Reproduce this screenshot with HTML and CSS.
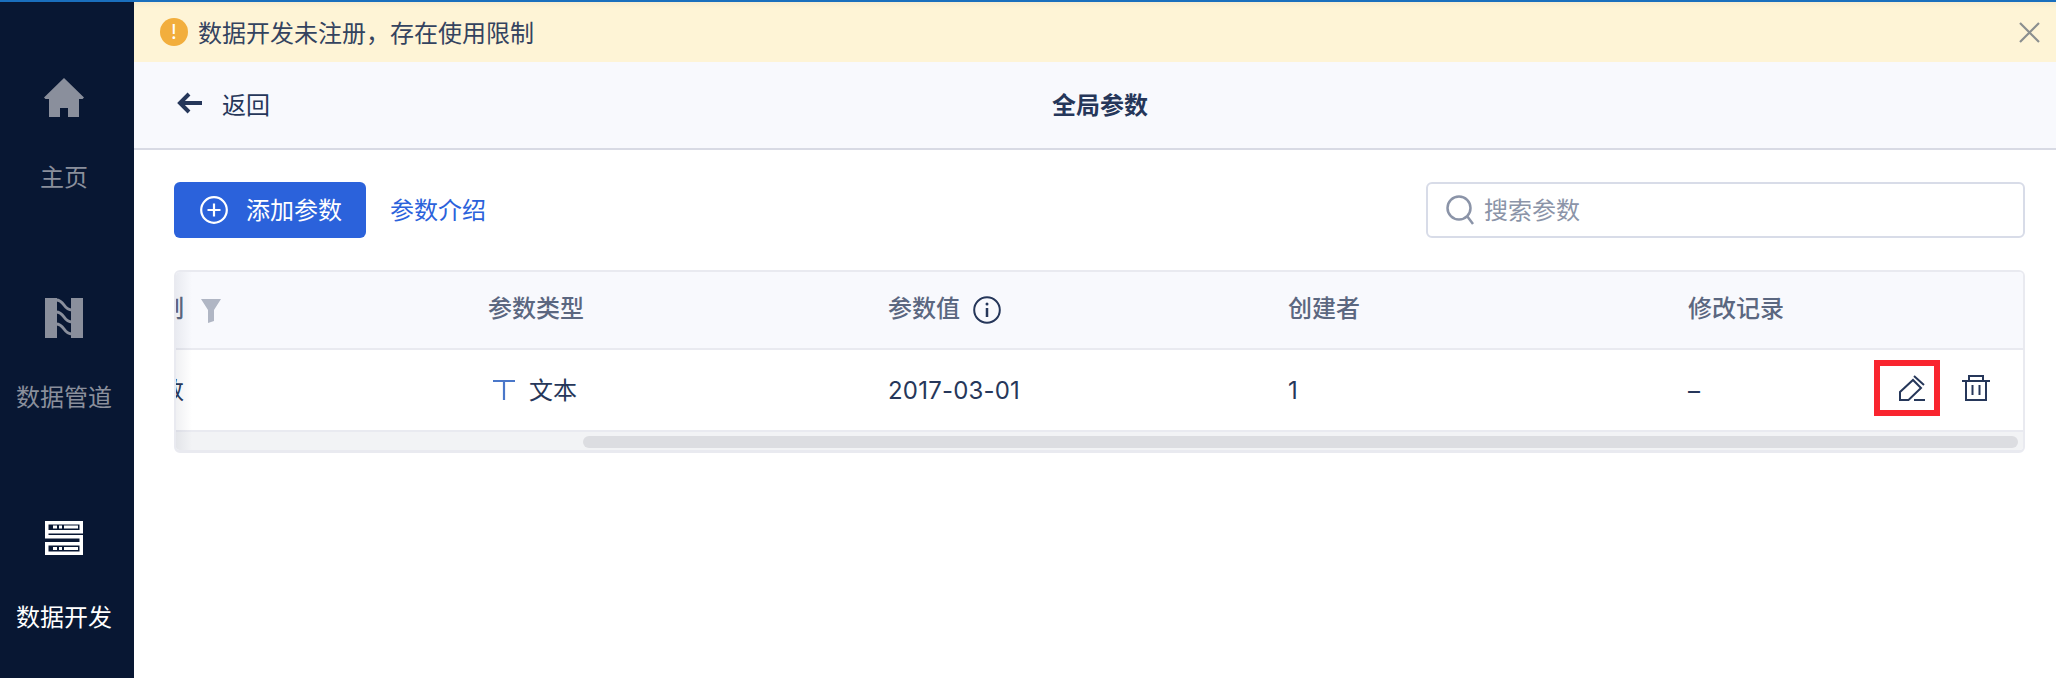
FILE: index.html
```html
<!doctype html>
<html lang="zh-CN">
  <head>
    <meta charset="utf-8">
    <title>全局参数</title>
    <link rel="stylesheet" href="styles.css">
  </head>
  <body>
    <div id="app">
      <nav id="sidebar">
        <a class="nav-item">
          <svg class="nav-icon" width="42" height="42" viewBox="0 0 42 42">
            <path d="M21 1 41 20.500 39.500 22H36V40H25V31H17V40H6V22H2.500L1 20.500Z" fill="currentColor"/>
          </svg>
          <span>主页</span>
        </a>
        <a class="nav-item">
          <svg class="nav-icon" width="38" height="42" viewBox="0 0 38 42" fill="none">
            <path d="M0 1H12V41H0ZM26 1H38V41H26Z" fill="currentColor"/>
            <g stroke="currentColor" stroke-width="3">
              <path d="M11 3C20 3 18 13 27 13"/>
              <path d="M11 15C20 15 18 25 27 25"/>
              <path d="M11 27C20 27 18 37 27 37"/>
            </g>
          </svg>
          <span>数据管道</span>
        </a>
        <a class="nav-item active">
          <svg class="nav-icon" width="38" height="42" viewBox="0 0 38 42" fill="none">
            <path d="M1.750 5.750H36.250V14.750H1.750ZM1.750 14.750V19.750H36.250V26.750M1.750 26.750H36.250V36.250H1.750Z" stroke="currentColor" stroke-width="3.500"/>
            <path d="M8 8.500H12V11.500H8ZM14 8.500H17V11.500H14ZM19 8.500H33V11.500H19ZM8 30H12V33H8ZM14 30H17V33H14ZM19 30H33V33H19Z" fill="currentColor"/>
          </svg>
          <span>数据开发</span>
        </a>
      </nav>

      <div id="content">
        <div class="notice">
          <span class="notice-icon">!</span>
          <span class="notice-text">数据开发未注册，存在使用限制</span>
          <svg class="notice-close" width="21" height="21" viewBox="0 0 21 21">
            <path d="M1 1 20 20M20 1 1 20" stroke="#8b8f8f" stroke-width="2.200" fill="none"/>
          </svg>
        </div>

        <header class="page-header">
          <a class="back">
            <svg width="26" height="22" viewBox="0 0 26 22" fill="none">
              <path d="M25 11H4M12 2 3 11 12 20" stroke="#26375a" stroke-width="4"/>
            </svg>
            <span>返回</span>
          </a>
          <h1>全局参数</h1>
        </header>

        <main class="page-body">
          <div class="toolbar">
            <button class="btn-add">
              <svg width="28" height="28" viewBox="0 0 28 28" fill="none" stroke="#fff" stroke-width="2.200">
                <circle cx="14" cy="14" r="12.800"/>
                <path d="M14 7.500V20.500M7.500 14H20.500"/>
              </svg>
              <span>添加参数</span>
            </button>
            <a class="link">参数介绍</a>
            <div class="search">
              <svg width="30" height="30" viewBox="0 0 30 30" fill="none" stroke="#8b94a8" stroke-width="2.500">
                <circle cx="13" cy="13" r="11.500"/>
                <path d="M21 21 27 29"/>
              </svg>
              <span>搜索参数</span>
            </div>
          </div>

          <div class="table">
            <div class="table-scroll">
              <div class="row head">
                <div class="cell first">
                  <span>限制</span>
                  <svg class="funnel" width="20" height="24" viewBox="0 0 20 24">
                    <path d="M0 0H20L13 11V22L7 24V11Z" fill="#b0b6c4"/>
                  </svg>
                </div>
                <div class="cell">参数类型</div>
                <div class="cell">
                  <span>参数值</span>
                  <svg class="info" width="28" height="28" viewBox="0 0 28 28" fill="none" stroke="#26375a" stroke-width="2">
                    <circle cx="14" cy="14" r="12.800"/>
                    <path d="M14 12V21" stroke-width="2.500"/>
                    <circle cx="14" cy="8" r="1.500" fill="#26375a" stroke="none"/>
                  </svg>
                </div>
                <div class="cell">创建者</div>
                <div class="cell">修改记录</div>
              </div>
              <div class="row">
                <div class="cell first"><span class="cjk">参数</span></div>
                <div class="cell">
                  <svg class="type-icon" width="22" height="20" viewBox="0 0 22 20">
                    <path d="M0 1H22M11 1V20" stroke="#4a77c9" stroke-width="2.200" fill="none"/>
                  </svg>
                  <span class="cjk">文本</span>
                </div>
                <div class="cell date">2017-03-01</div>
                <div class="cell">1</div>
                <div class="cell last">
                  <span>–</span>
                  <div class="actions">
                    <button class="action edit">
                      <svg width="26" height="26" viewBox="0 0 26 26" fill="none" stroke="#26375a" stroke-width="2">
                        <path d="M1 25V17L14 5 22 13 9.500 25ZM15 1 25 10M15 25H26"/>
                      </svg>
                    </button>
                    <button class="action">
                      <svg width="28" height="26" viewBox="0 0 28 26" fill="none" stroke="#26375a" stroke-width="2">
                        <path d="M0 6H28M7 6V1H21V6M4 6V25H24V6M10.500 10V20M17.500 10V20"/>
                      </svg>
                    </button>
                  </div>
                </div>
              </div>
            </div>
            <div class="scrollbar"><div class="thumb"></div></div>
            <div class="edge-shadow"></div>
          </div>
        </main>
      </div>
    </div>
  </body>
</html>
```

FILE: styles.css
```css
* {
  box-sizing: border-box;
}

html, body {
  height: 100%;
  margin: 0;
  overflow: hidden;
  background: #fff;
  color: #26375a;
  font-family: Inter, "Noto Sans CJK SC", sans-serif;
  font-size: 24px;
}

body {
  border-top: 2px solid #1a6fbd;
}

#app {
  display: flex;
  height: 100%;
}

#sidebar {
  flex: 0 0 134px;
  background: #081733;
  display: flex;
  flex-direction: column;
  padding: 75px 6px 0 0;
}

.nav-item {
  flex: 0 0 220px;
  display: flex;
  flex-direction: column;
  align-items: center;
  gap: 41px;
  color: #8a8f9c;
  line-height: 36px;
  white-space: nowrap;
}

.nav-item:last-child {
  flex-basis: auto;
}

.nav-item.active {
  color: #fff;
}

.nav-icon {
  flex: none;
}

#content {
  flex: 1 1 auto;
  min-width: 0;
  display: flex;
  flex-direction: column;
}

.notice {
  height: 60px;
  flex: none;
  display: flex;
  align-items: center;
  padding: 0 16px 0 26px;
  background: linear-gradient(#f7ecd0, #fef4d6 6px);
  color: #34435f;
}

.notice-icon {
  width: 28px;
  height: 28px;
  margin-right: 10px;
  border-radius: 50%;
  background: #f2ae3d;
  color: #fff;
  font-size: 20px;
  line-height: 28px;
  text-align: center;
}

.notice-text {
  flex: 1;
  padding-bottom: 2px;
}

.page-header {
  height: 88px;
  flex: none;
  display: flex;
  align-items: center;
  position: relative;
  padding: 0 0 4px 43px;
  background: #f8f9fd;
  border-bottom: 2px solid #d8dae4;
}

.back {
  display: flex;
  align-items: center;
  gap: 19px;
}

.page-header h1 {
  position: absolute;
  left: 0;
  right: 0;
  margin: 0 0 0 10px;
  font-size: 24px;
  font-weight: 700;
  text-align: center;
}

.page-body {
  padding: 32px 31px 0 40px;
}

.toolbar {
  display: flex;
  align-items: center;
  height: 56px;
}

.btn-add {
  width: 192px;
  height: 56px;
  display: flex;
  align-items: center;
  gap: 18px;
  padding: 0 0 0 26px;
  border: 0;
  border-radius: 6px;
  background: #2b62db;
  color: #fff;
  font: inherit;
}

.btn-add span,
.search span,
.link {
  padding-bottom: 4px;
}

.link {
  margin-left: 24px;
  color: #2b62db;
}

.search {
  width: 599px;
  height: 56px;
  margin-left: auto;
  display: flex;
  align-items: center;
  gap: 8px;
  padding-left: 18px;
  border: 2px solid #d8dce8;
  border-radius: 6px;
  color: #8b94a8;
}

.table {
  position: relative;
  margin-top: 32px;
  border: 2px solid #e9eaf0;
  border-bottom-width: 3px;
  border-radius: 6px;
  overflow: hidden;
}

.table-scroll {
  overflow: hidden;
}

.row {
  display: grid;
  grid-template-columns: 400px 400px 400px 400px 335px;
  margin-left: -88px;
  height: 82px;
  border-bottom: 2px solid #e9eaf0;
}

.row.head {
  height: 78px;
  background: #f8f9fd;
  color: #5b6780;
  font-weight: 500;
}

.cell {
  display: flex;
  align-items: center;
  white-space: nowrap;
}

.cell.first {
  padding-left: 48px;
}

.head .cell {
  padding-bottom: 8px;
}

.cjk {
  padding-bottom: 4px;
}

.date {
  letter-spacing: 0.2px;
}

.funnel {
  margin: 10px 0 0 17px;
}

.info {
  margin: 8px 0 0 13px;
}

.type-icon {
  margin: 0 14px 0 5px;
}

.cell.last {
  justify-content: space-between;
  padding-right: 33px;
}

.actions {
  display: flex;
  align-items: center;
  gap: 22px;
  margin-bottom: 4px;
}

.action {
  display: flex;
  padding: 0;
  border: 0;
  background: none;
}

.action.edit {
  width: 66px;
  height: 56px;
  align-items: center;
  padding-left: 19px;
  border: 6px solid #f9252f;
}

.scrollbar {
  height: 18px;
  padding: 4px 5px 2px 407px;
  background: #f2f3f5;
}

.thumb {
  height: 12px;
  border-radius: 6px;
  background: #dcdde1;
}

.edge-shadow {
  position: absolute;
  left: 0;
  top: 0;
  bottom: 0;
  width: 16px;
  background: linear-gradient(to right, rgba(40, 50, 80, 0.07), rgba(40, 50, 80, 0));
}
```
